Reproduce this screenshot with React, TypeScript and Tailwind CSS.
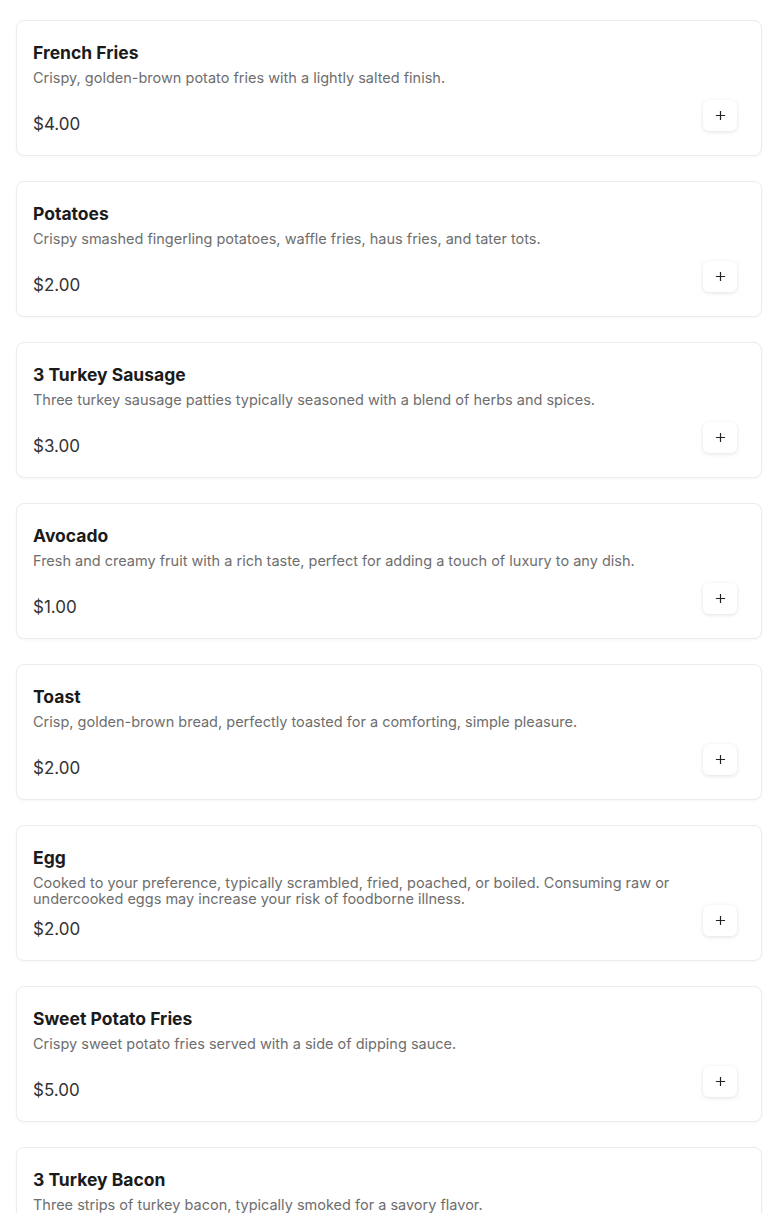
import React from "react";

type Item = { name: string; desc: string; price: string };

const ITEMS: Item[] = [
  { name: "French Fries", desc: "Crispy, golden-brown potato fries with a lightly salted finish.", price: "$4.00" },
  { name: "Potatoes", desc: "Crispy smashed fingerling potatoes, waffle fries, haus fries, and tater tots.", price: "$2.00" },
  { name: "3 Turkey Sausage", desc: "Three turkey sausage patties typically seasoned with a blend of herbs and spices.", price: "$3.00" },
  { name: "Avocado", desc: "Fresh and creamy fruit with a rich taste, perfect for adding a touch of luxury to any dish.", price: "$1.00" },
  { name: "Toast", desc: "Crisp, golden-brown bread, perfectly toasted for a comforting, simple pleasure.", price: "$2.00" },
  {
    name: "Egg",
    desc: "Cooked to your preference, typically scrambled, fried, poached, or boiled. Consuming raw or undercooked eggs may increase your risk of foodborne illness.",
    price: "$2.00",
  },
  { name: "Sweet Potato Fries", desc: "Crispy sweet potato fries served with a side of dipping sauce.", price: "$5.00" },
  { name: "3 Turkey Bacon", desc: "Three strips of turkey bacon, typically smoked for a savory flavor.", price: "$3.00" },
];

function PlusIcon() {
  return (
    <svg width="11" height="11" viewBox="0 0 12 12" fill="none">
      <path d="M6 1v10M1 6h10" stroke="#222" strokeWidth="1.3" />
    </svg>
  );
}

function ItemCard({ item }: { item: Item }) {
  return (
    <div className="rounded-lg border border-[#ececec] bg-white shadow-[0_1px_3px_rgba(0,0,0,0.04)] pl-4 pr-6 pt-5 pb-5 flex items-end">
      <div className="flex-1 min-w-0">
        <div className="text-[17.5px] leading-6 font-bold text-[#1b1b1b]">{item.name}</div>
        <div className="mt-[5px] h-8 max-w-[660px] text-[14.5px] leading-4 text-[#6e6e6e]">{item.desc}</div>
        <div className="mt-[11px] text-[17px] leading-[22px] text-[#333]">{item.price}</div>
      </div>
      <button className="mb-1 w-[34px] h-[31px] rounded-md bg-white shadow-[0_1px_4px_rgba(0,0,0,0.12)] flex items-center justify-center">
        <PlusIcon />
      </button>
    </div>
  );
}

export default function App() {
  return (
    <div className="min-h-screen bg-white px-4 pt-5 pb-6 font-['Inter','Liberation_Sans',sans-serif]">
      <div className="flex flex-col gap-[25px]">
        {ITEMS.map((it) => (
          <ItemCard key={it.name} item={it} />
        ))}
      </div>
    </div>
  );
}
